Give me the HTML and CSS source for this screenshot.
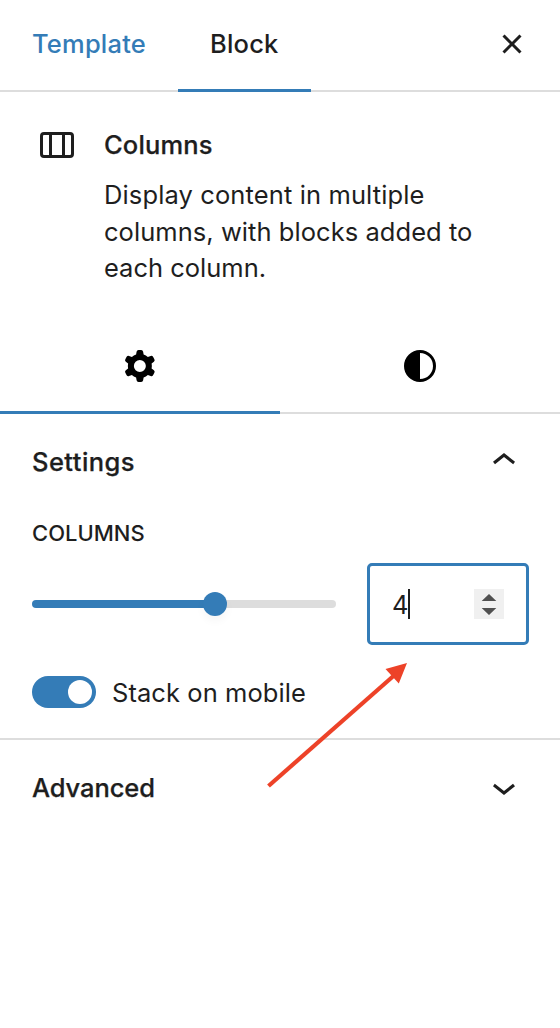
FILE: index.html
```html
<!DOCTYPE html>
<html lang="en">
<head>
<meta charset="utf-8">
<title>Block settings</title>
<link rel="stylesheet" href="styles.css">
</head>
<body>
<aside class="sidebar">
  <header class="header">
    <nav class="tabs">
      <div class="tab tab-template"><span class="t-template">Template</span></div>
      <div class="tab tab-block active"><span class="t-block">Block</span></div>
    </nav>
    <svg class="icon close" viewBox="0 0 24 24"><path d="M12 13.06l3.712 3.713 1.061-1.06L13.061 12l3.712-3.712-1.06-1.06L12 10.938 8.288 7.227l-1.061 1.06L10.939 12l-3.712 3.712 1.06 1.061L12 13.061z"/></svg>
  </header>
  <section class="card">
    <svg class="card-icon" viewBox="0 0 34 26"><rect x="1.5" y="1.5" width="31" height="23" rx="2.5"/><path d="M10.5 1.500v23M23.500 1.500v23"/></svg>
    <div class="card-text">
      <h2 class="title t-columns">Columns</h2>
      <p class="description"><span class="d1">Display content in multiple</span><br><span class="d2">columns, with blocks added to</span><br><span class="d3">each column.</span></p>
    </div>
  </section>
  <div class="views">
    <div class="view active"><svg class="icon view-icon" viewBox="0 0 24 24"><path fill-rule="evenodd" d="M10.289 4.836A1 1 0 0111.275 4h1.306a1 1 0 01.987.836l.244 1.466c.787.26 1.503.679 2.108 1.218l1.393-.522a1 1 0 011.216.437l.653 1.13a1 1 0 01-.23 1.273l-1.148.944a6.025 6.025 0 010 2.435l1.149.946a1 1 0 01.23 1.272l-.653 1.13a1 1 0 01-1.216.437l-1.394-.522c-.605.54-1.32.958-2.108 1.218l-.244 1.466a1 1 0 01-.987.836h-1.306a1 1 0 01-.986-.836l-.244-1.466a5.995 5.995 0 01-2.108-1.218l-1.394.522a1 1 0 01-1.217-.436l-.653-1.131a1 1 0 01.23-1.272l1.149-.946a6.026 6.026 0 010-2.435l-1.148-.944a1 1 0 01-.23-1.272l.653-1.131a1 1 0 011.217-.437l1.393.522a5.994 5.994 0 012.108-1.218l.244-1.466zM14.929 12a3 3 0 11-6 0 3 3 0 016 0z"/></svg></div>
    <div class="view"><svg class="icon view-icon" viewBox="0 0 24 24"><path fill-rule="evenodd" d="M12 4a8 8 0 100 16 8 8 0 000-16zm0 14.5v-13a6.5 6.5 0 010 13z"/></svg></div>
  </div>
  <section class="panel settings">
    <div class="panel-head">
      <h2 class="title t-settings">Settings</h2>
      <svg class="icon chevron-up" viewBox="0 0 24 24"><path d="M6.5 12.4L12 8l5.5 4.4-.9 1.2L12 10l-4.5 3.6-1-1.2z"/></svg>
    </div>
    <div class="label"><span class="t-label">COLUMNS</span></div>
    <div class="range">
      <div class="track"><div class="fill"></div><div class="thumb"></div><div class="rest"></div></div>
      <div class="number">
        <span class="value">4</span><span class="caret"></span>
        <svg class="spinner" viewBox="0 0 30 30"><path d="M15 5l7.300 7H7.700zM7.700 19h14.600l-7.300 7z"/></svg>
      </div>
    </div>
    <div class="toggle-row">
      <div class="toggle"><div class="knob"></div></div>
      <span class="t-stack">Stack on mobile</span>
    </div>
  </section>
  <section class="panel-head advanced">
    <h2 class="title t-advanced">Advanced</h2>
    <svg class="icon chevron-down" viewBox="0 0 24 24"><path d="M17.500 11.600L12 16l-5.500-4.400.9-1.200L12 14l4.500-3.600 1 1.200z"/></svg>
  </section>
  <svg class="arrow" viewBox="0 0 150 130"><path class="shaft" d="M8.500 126L134 15.500"/><path class="head" d="M147 3l-21.500 6 13.300 14.500z"/></svg>
</aside>
</body>
</html>
```
FILE: styles.css
```css
* { box-sizing: border-box; }
body {
  margin: 0;
  background: #fff;
  color: #1e1e1e;
  font: 400 25.5px/36px Inter, "Liberation Sans", sans-serif;
}
.sidebar { position: relative; width: 560px; height: 1028px; overflow: hidden; }
.title { margin: 0; font-size: 25.5px; font-weight: 500; line-height: 36px; -webkit-text-stroke: .25px #1e1e1e; }
span, .title { white-space: nowrap; }
.icon { display: block; width: 48px; height: 48px; flex: none; fill: #1e1e1e; }
.header { display: flex; justify-content: space-between; height: 92px; padding-right: 24px; border-bottom: 2px solid #ddd; }
.tabs { display: flex; font-weight: 500; }
.tab { height: 92px; padding: 26px 32px 0; }
.tab-template { width: 178px; color: #347cb7; letter-spacing: .2px; }
.tab-block { width: 132.500px; letter-spacing: .2px; }
.tab.active { border-bottom: 3px solid #347cb7; }
.close { margin-top: 20px; }
.card { display: flex; gap: 30px; padding: 35px 32px 0 40px; height: 226px; }
.card-icon { width: 34px; height: 26px; margin-top: 5px; flex: none; fill: none; stroke: #1e1e1e; stroke-width: 3; }
.description { margin: 14px 0 0; line-height: 36.700px; }
.d1 { letter-spacing: .12px; }
.d2 { letter-spacing: .05px; }
.t-columns { letter-spacing: .15px; }
.t-settings { letter-spacing: .45px; }
.t-advanced { letter-spacing: -.1px; }
.t-stack { padding-top: 2px; letter-spacing: .07px; }
.views { display: flex; height: 96px; }
.view { display: flex; justify-content: center; width: 280px; padding-top: 24px; border-bottom: 2px solid #ddd; }
.view.active { border-bottom: 3px solid #347cb7; }
.view-icon { fill: #000; }
.panel-head { display: flex; justify-content: space-between; align-items: flex-start; padding: 0 32px; }
.settings { height: 326px; padding-top: 23px; border-bottom: 2px solid #ddd; }
.settings .panel-head { height: 82px; }
.settings .title { margin-top: 7px; }
.label { height: 28px; padding-left: 32px; font-size: 22px; font-weight: 500; line-height: 28px; }
.range { display: flex; align-items: center; justify-content: space-between; height: 82px; margin-top: 16px; padding: 0 31px 0 32px; }
.track { display: flex; align-items: center; width: 304px; }
.fill { width: 173px; height: 8px; margin-right: -2px; border-radius: 4px 0 0 4px; background: #347cb7; }
.thumb { z-index: 1; width: 24px; height: 24px; border-radius: 50%; background: #347cb7; box-shadow: 0 5px 8px rgba(0,0,0,.04); }
.rest { flex: 1; height: 8px; margin-left: -2px; border-radius: 0 4px 4px 0; background: #ddd; }
.number { display: flex; align-items: center; width: 162px; height: 82px; padding: 0 22px; border: 3px solid #347cb7; border-radius: 5px; }
.value { width: 16px; padding-top: 2px; letter-spacing: -1px; }
.caret { width: 2px; height: 30px; background: #1e1e1e; }
.spinner { width: 30px; height: 30px; margin-left: auto; background: #f0f0f0; fill: #505050; }
.toggle-row { display: flex; align-items: center; gap: 16px; height: 38px; margin-top: 28px; padding-left: 32px; }
.toggle { display: flex; justify-content: flex-end; width: 64px; height: 32px; padding: 4px; border-radius: 16px; background: #347cb7; }
.knob { width: 24px; height: 24px; border-radius: 50%; background: #fff; }
.advanced { padding-top: 23px; }
.advanced .title { margin-top: 7px; }
.arrow { position: absolute; left: 260px; top: 660px; width: 150px; height: 130px; }
.shaft { fill: none; stroke: #ed4228; stroke-width: 4.200; }
.head { fill: #ed4228; }
```
